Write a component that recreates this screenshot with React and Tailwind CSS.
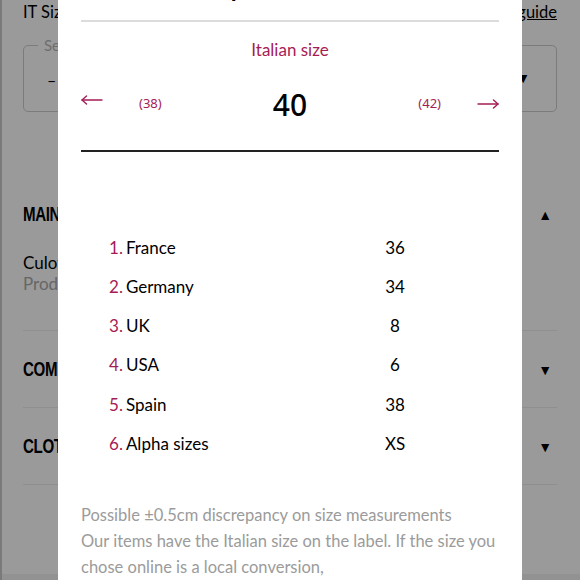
import React from "react";

const rows = [
  ["France", "36"],
  ["Germany", "34"],
  ["UK", "8"],
  ["USA", "6"],
  ["Spain", "38"],
  ["Alpha sizes", "XS"],
];

const headFont = { fontFamily: "'Liberation Sans', Arial, sans-serif" };

const Head = ({ children }) => (
  <span
    className="inline-block origin-left scale-x-[0.72] text-[21px] font-bold text-black tracking-tight"
    style={headFont}
  >
    {children}
  </span>
);

const Section = ({ title }) => (
  <div className="flex items-center justify-between h-[77px] border-b border-[#8f8f8f]">
    <Head>{title}</Head>
    <span className="text-[14px] text-black mr-[5px]">▼</span>
  </div>
);

const Arrow = ({ dir }) => (
  <svg width="22" height="12" viewBox="0 0 22 12" fill="none" stroke="#a51c55" strokeWidth="1.4" strokeLinecap="round">
    {dir === "left" ? (
      <>
        <path d="M1 6H21" />
        <path d="M5.5 2L1 6l4.5 4" />
      </>
    ) : (
      <>
        <path d="M1 6H21" />
        <path d="M16.5 2L21 6l-4.5 4" />
      </>
    )}
  </svg>
);

export default function App() {
  return (
    <div
      className="relative w-[580px] h-[580px] overflow-hidden bg-[#9a9a9a] border-l-2 border-[#7a7a7a]"
      style={{ fontFamily: "Lato, 'Noto Sans', sans-serif" }}
    >
      {/* page behind the overlay */}
      <div className="pl-[21px] pr-[23px]">
        <div className="flex justify-between items-center h-[24px] text-[16.5px] text-black">
          <span>IT Size</span>
          <span className="underline">Size guide</span>
        </div>
        <div className="relative mt-[21px] h-[67px] rounded-[5px] border-[1.5px] border-[#7c7c7c] flex items-center justify-between pl-[23px] pr-[26px]">
          <span className="absolute -top-[12px] left-[14px] px-[6px] bg-[#9a9a9a] text-[15px] text-[#6e6e6e]">Select</span>
          <span className="text-[16px] text-black mt-[2px]">–</span>
          <span className="text-[14px] text-black -mt-[2px]">▼</span>
        </div>
        <div className="mt-[64px]">
          <div className="flex items-center justify-between h-[76px]">
            <Head>MAIN</Head>
            <span className="text-[14px] text-black mr-[5px]">▲</span>
          </div>
          <div className="border-b border-[#8f8f8f] pb-[36px] text-[17px] leading-[21px]">
            <div className="text-black">Culottes</div>
            <div className="text-[#666]">Product</div>
          </div>
          <Section title="COMPOSITION" />
          <Section title="CLOTHING" />
        </div>
      </div>
      <div className="absolute left-0 right-0 bottom-0 h-[6px] bg-[#929292]" />

      {/* modal */}
      <div className="absolute top-0 left-[56px] w-[464px] h-[580px] bg-white px-[23px] text-black">
        <div className="-mt-[27px] h-[47px] pr-[64px] text-center text-[24px] leading-[30px] font-bold">
          Compare sizes
        </div>
        <div className="h-[2px] bg-[#dcdcdc]" />
        <div className="mt-[16px] text-center text-[17px] leading-[24px] text-[#a51c55]">Italian size</div>
        <div className="flex items-center h-[50px] mt-[17px]">
          <span className="w-[58px] -mt-[9px]"><Arrow dir="left" /></span>
          <span className="text-[13px] text-[#a51c55]" style={{ fontFamily: "'Noto Sans', sans-serif" }}>(38)</span>
          <span className="flex-1 text-center text-[30px] font-medium" style={{ fontFamily: "'Noto Sans', sans-serif" }}>40</span>
          <span className="text-[13px] text-[#a51c55]" style={{ fontFamily: "'Noto Sans', sans-serif" }}>(42)</span>
          <span className="w-[58px] flex justify-end -mt-[1px]"><Arrow dir="right" /></span>
        </div>
        <div className="mt-[21px] h-[2px] bg-[#222]" />
        <div className="mt-[76px] pl-[28px]">
          {rows.map(([name, val], i) => (
            <div key={name} className="flex items-center h-[39.2px] text-[17px]">
              <span className="w-[286px]">
                <span className="text-[#a51c55] mr-[3px]">{i + 1}.</span>{name}
              </span>
              <span className="w-[0px] flex justify-center">{val}</span>
            </div>
          ))}
        </div>
        <div className="mt-[39px] text-[16.5px] leading-[26px] text-[#9b9b9b]">
          Possible ±0.5cm discrepancy on size measurements
          <br />
          Our items have the Italian size on the label. If the size you chose online is a local conversion,
        </div>
      </div>
    </div>
  );
}
